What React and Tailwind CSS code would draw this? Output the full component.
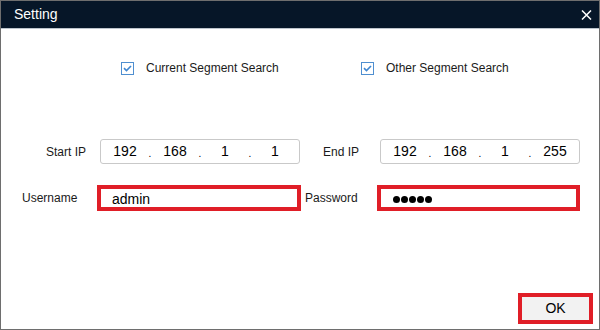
import React from "react";

function Check() {
  return (
    <div className="w-[13px] h-[13px] border border-[#4f8fd0] bg-white flex items-center justify-center">
      <svg width="9" height="7" viewBox="0 0 9 7">
        <path d="M1 3.2 L3.5 5.6 L8 1" fill="none" stroke="#3f86d0" strokeWidth="1.6" />
      </svg>
    </div>
  );
}

function IpBox({ parts }) {
  return (
    <div className="w-[200px] h-[25px] rounded-[3px] border border-[#c9c9c9] bg-white flex items-center pl-[2px] text-[14px] text-black">
      <span className="w-[44px] text-center">{parts[0]}</span>
      <span className="w-[6px] text-center text-[10px] mt-[3px]">.</span>
      <span className="w-[44px] text-center">{parts[1]}</span>
      <span className="w-[6px] text-center text-[10px] mt-[3px]">.</span>
      <span className="w-[44px] text-center">{parts[2]}</span>
      <span className="w-[6px] text-center text-[10px] mt-[3px]">.</span>
      <span className="w-[44px] text-center">{parts[3]}</span>
    </div>
  );
}

export default function App() {
  return (
    <div
      className="w-[600px] h-[330px] border border-[#6e6e6e] bg-white flex flex-col text-[#1a1a1a]"
      style={{ fontFamily: '"Liberation Sans", Arial, sans-serif' }}
    >
      <div className="h-[28px] bg-[#061628] flex items-center justify-between pl-[13px] pr-[7px] border-b border-[#bcc4cc]">
        <span className="text-white text-[14px]">Setting</span>
        <svg width="11" height="10" viewBox="0 0 11 10">
          <path d="M1 0.5 L10 9.5 M10 0.5 L1 9.5" stroke="white" strokeWidth="1.5" />
        </svg>
      </div>

      <div className="flex items-center mt-[30px] pl-[120px] text-[12px]">
        <div className="w-[240px] flex items-center">
          <Check />
          <span className="ml-[12px]">Current Segment Search</span>
        </div>
        <div className="flex items-center">
          <Check />
          <span className="ml-[12px]">Other Segment Search</span>
        </div>
      </div>

      <div className="flex items-center mt-[62px] text-[12px]">
        <span className="w-[85px] text-right">Start IP</span>
        <div className="ml-[14px]">
          <IpBox parts={["192", "168", "1", "1"]} />
        </div>
        <span className="w-[59px] text-right">End IP</span>
        <div className="ml-[21px]">
          <IpBox parts={["192", "168", "1", "255"]} />
        </div>
      </div>

      <div className="flex items-center mt-[21px] text-[12px]">
        <span className="ml-[21px] w-[75px]">Username</span>
        <div className="w-[204px] h-[26px] border-4 border-[#e01e27] bg-white flex items-center pl-[11px] text-[14px] text-black">
          <span className="mt-[2px]">admin</span>
        </div>
        <span className="ml-[4px] w-[72px]">Password</span>
        <div className="w-[203px] h-[26px] border-4 border-[#e01e27] bg-white flex items-center pl-[12px]">
          <div className="flex gap-[1px] mt-[3px]">
            <div className="w-[7px] h-[7px] rounded-full bg-black" />
            <div className="w-[7px] h-[7px] rounded-full bg-black" />
            <div className="w-[7px] h-[7px] rounded-full bg-black" />
            <div className="w-[7px] h-[7px] rounded-full bg-black" />
            <div className="w-[7px] h-[7px] rounded-full bg-black" />
          </div>
        </div>
      </div>

      <div className="flex-1" />
      <div className="flex justify-end mr-[6px] mb-[5px]">
        <div className="w-[75px] h-[31px] border-4 border-[#e01e27] bg-[#f2f2f2] flex items-center justify-center text-[14px] text-black">
          OK
        </div>
      </div>
    </div>
  );
}
